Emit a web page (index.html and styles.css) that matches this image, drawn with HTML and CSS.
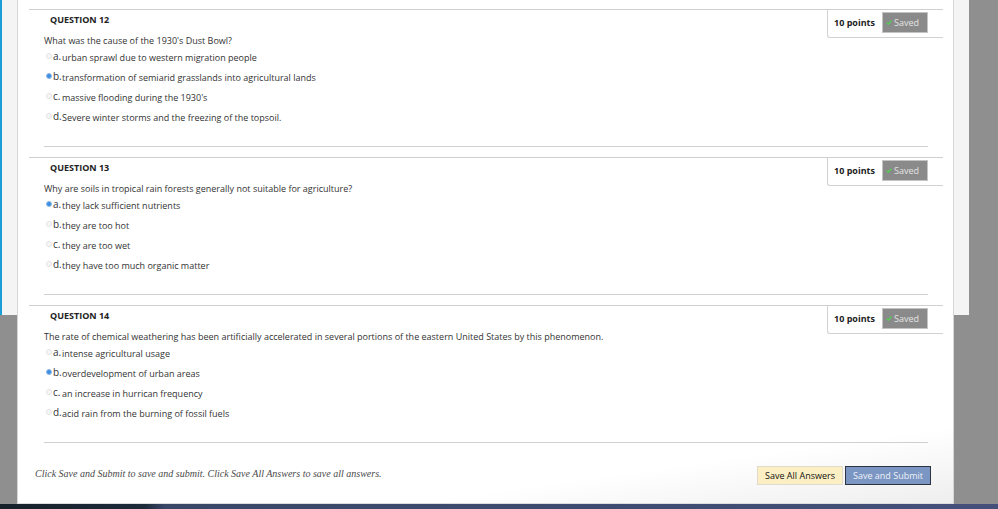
FILE: index.html
```html
<!DOCTYPE html>
<html lang="en">

<head>
    <meta charset="UTF-8">
    <title>Take Test</title>
    <link rel="stylesheet" href="styles.css">
</head>

<body>
    <div class="backdrop"></div>

    <div class="dialog">
        <div class="question">
            <div class="points"><b>10 points</b><span class="saved"><svg class="check" viewBox="0 0 6 5"><path d="M0.6 2.6 L2.3 4.2 L5.4 0.8" /></svg>Saved</span></div>
            <h3 class="q-title">QUESTION 12</h3>
            <p class="q-text">What was the cause of the 1930's Dust Bowl?</p>
            <ul class="answers">
                <li><span class="radio"></span><span class="letter">a.</span>urban sprawl due to western migration people</li>
                <li><span class="radio checked"></span><span class="letter">b.</span>transformation of semiarid grasslands into agricultural lands</li>
                <li><span class="radio"></span><span class="letter">c.</span>massive flooding during the 1930's</li>
                <li><span class="radio"></span><span class="letter">d.</span>Severe winter storms and the freezing of the topsoil.</li>
            </ul>
            <div class="q-end"></div>
        </div>

        <div class="question">
            <div class="points"><b>10 points</b><span class="saved"><svg class="check" viewBox="0 0 6 5"><path d="M0.6 2.6 L2.3 4.2 L5.4 0.8" /></svg>Saved</span></div>
            <h3 class="q-title">QUESTION 13</h3>
            <p class="q-text">Why are soils in tropical rain forests generally not suitable for agriculture?</p>
            <ul class="answers">
                <li><span class="radio checked"></span><span class="letter">a.</span>they lack sufficient nutrients</li>
                <li><span class="radio"></span><span class="letter">b.</span>they are too hot</li>
                <li><span class="radio"></span><span class="letter">c.</span>they are too wet</li>
                <li><span class="radio"></span><span class="letter">d.</span>they have too much organic matter</li>
            </ul>
            <div class="q-end"></div>
        </div>

        <div class="question">
            <div class="points"><b>10 points</b><span class="saved"><svg class="check" viewBox="0 0 6 5"><path d="M0.6 2.6 L2.3 4.2 L5.4 0.8" /></svg>Saved</span></div>
            <h3 class="q-title">QUESTION 14</h3>
            <p class="q-text">The rate of chemical weathering has been artificially accelerated in several portions of the eastern United States by this phenomenon.</p>
            <ul class="answers">
                <li><span class="radio"></span><span class="letter">a.</span>intense agricultural usage</li>
                <li><span class="radio checked"></span><span class="letter">b.</span>overdevelopment of urban areas</li>
                <li><span class="radio"></span><span class="letter">c.</span>an increase in hurrican frequency</li>
                <li><span class="radio"></span><span class="letter">d.</span>acid rain from the burning of fossil fuels</li>
            </ul>
            <div class="q-end"></div>
        </div>

        <div class="footer">
            <p class="hint">Click Save and Submit to save and submit. Click Save All Answers to save all answers.</p>
            <div class="buttons">
                <button class="btn btn-save">Save All Answers</button>
                <button class="btn btn-submit">Save and Submit</button>
            </div>
        </div>
    </div>

    <div class="taskbar"></div>
</body>

</html>
```

FILE: styles.css
```css
body {
    margin: 0;
    height: 509px;
    overflow: hidden;
    position: relative;
    background-color: #8f8f8f;
    font-family: "Open Sans", Arial, sans-serif;
    font-size: 9px;
    color: #333;
}

.backdrop {
    width: 967px;
    height: 315px;
    background-color: #f4f4f4;
    border-left: 2px solid #1b9dd8;
}

.dialog {
    position: absolute;
    top: 0;
    left: 17px;
    width: 937px;
    height: 504px;
    background: linear-gradient(172deg, #ffffff 88%, #eeeeee 100%);
    border-left: 1px solid #d6d6d6;
    border-right: 1px solid #d6d6d6;
    border-bottom: 1px solid #dddddd;
    padding-top: 9px;
    box-sizing: border-box;
}

.question {
    margin: 0 10px 10px 11px;
    border-top: 1px solid #cfcfcf;
}

.points {
    float: right;
    display: flex;
    align-items: center;
    padding: 2px 15px 4px 6px;
    border-left: 1px solid #d2d2d2;
    border-bottom: 1px solid #d2d2d2;
    border-bottom-left-radius: 3px;
}

.points b {
    color: #222;
    width: 48px;
}

.saved {
    display: inline-flex;
    align-items: center;
    height: 21px;
    width: 46px;
    box-sizing: border-box;
    padding-left: 3px;
    background-color: #8a8a8a;
    border: 1px solid #c4c4c4;
    color: #e4e4e4;
}

.check {
    width: 6px;
    height: 5px;
    margin-right: 2px;
    fill: none;
    stroke: #4fd14f;
    stroke-width: 1.3;
}

.q-title {
    margin: 0;
    padding: 4px 0 0 21px;
    font-size: 9px;
    line-height: 12px;
    font-weight: bold;
    color: #222;
}

.q-text {
    margin: 8px 0 0 15px;
    line-height: 14px;
}

.answers {
    list-style: none;
    margin: -1px 0 0 0;
    padding: 0;
}

.answers li {
    display: flex;
    align-items: center;
    height: 20px;
    padding-left: 17px;
}

.radio {
    width: 4px;
    height: 4px;
    border-radius: 50%;
    border: 1px solid #e2e2e2;
    background-color: #f7f7f7;
    margin-bottom: 2px;
}

.radio.checked {
    border-color: #8fbbe8;
    background-color: #3d8ee0;
}

.letter {
    width: 9px;
    margin-left: 1px;
    margin-bottom: 3px;
    font-size: 10px;
}

.q-end {
    clear: both;
    height: 1px;
    margin: 19px 15px 0 15px;
    background-color: #d0d0d0;
}

.footer {
    display: flex;
    align-items: center;
    justify-content: space-between;
    padding: 13px 22px 0 17px;
}

.hint {
    margin: 0 0 4px 0;
    font-family: "Liberation Serif", "Times New Roman", serif;
    font-style: italic;
    font-size: 10px;
    color: #4a4a4a;
}

.buttons {
    display: flex;
    gap: 2px;
}

.btn {
    height: 19px;
    width: 86px;
    padding: 0;
    font-family: "Open Sans", Arial, sans-serif;
    font-size: 9px;
}

.btn-save {
    background-color: #fcefc4;
    border: 1px solid #e0dccb;
    color: #111;
}

.btn-submit {
    background-color: #7b96c3;
    border: 1px solid #2c3240;
    color: #eef2f8;
}

.taskbar {
    position: absolute;
    left: 0;
    right: 0;
    bottom: 0;
    height: 5px;
    background: linear-gradient(to right, #152029 0, #1d2a3a 145px, #394767 165px, #44507a 100%);
}
```
